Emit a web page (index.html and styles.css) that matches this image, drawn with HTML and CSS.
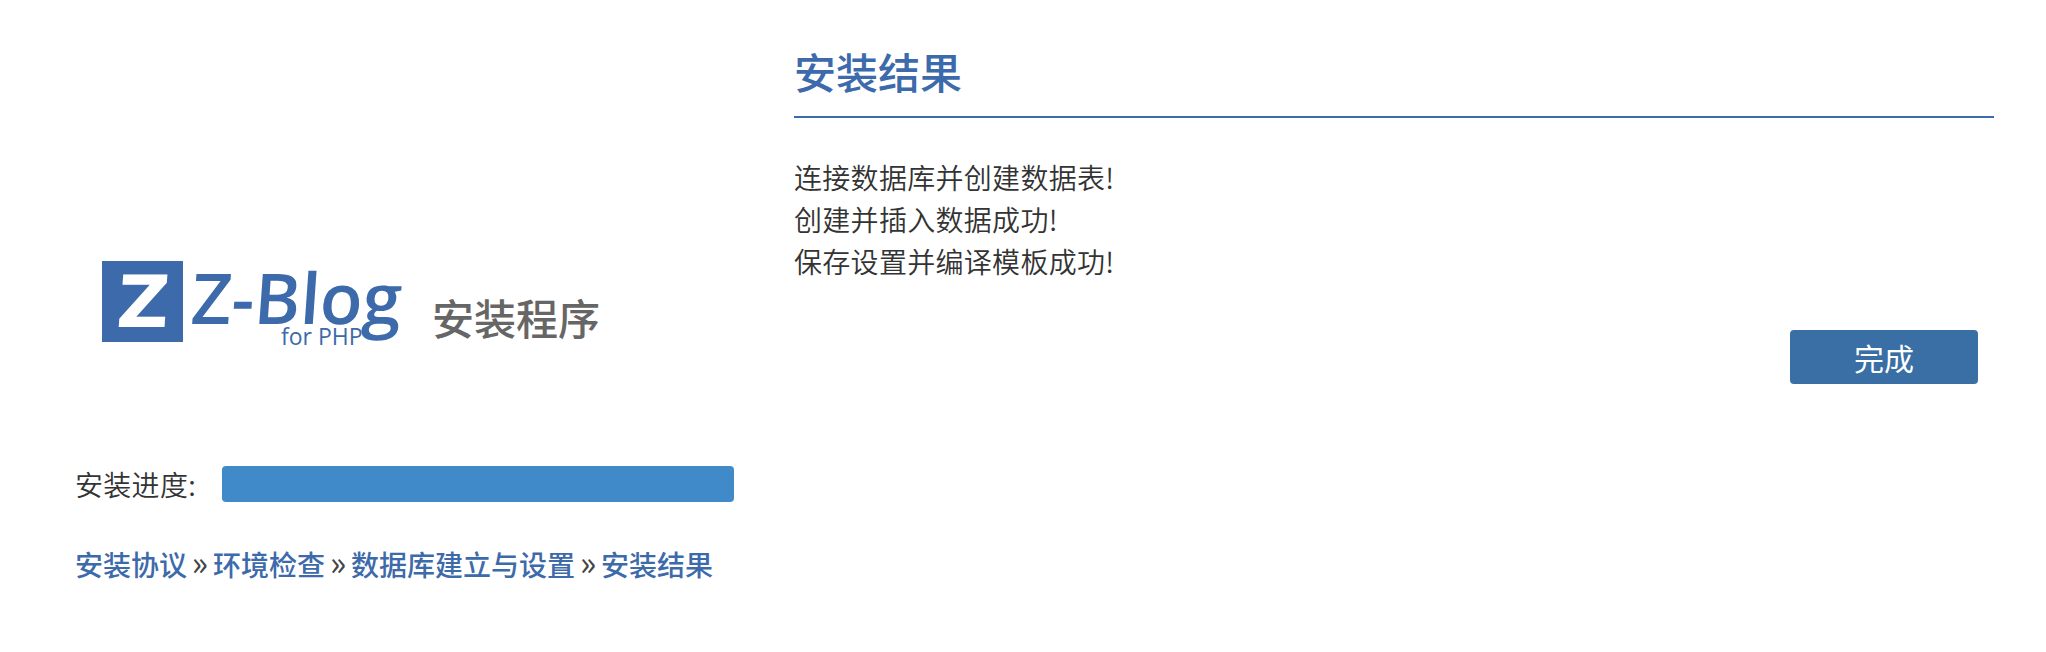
FILE: index.html
```html
<!DOCTYPE html>
<html lang="en">
<head>
  <meta charset="UTF-8">
  <title>Z-Blog 安装程序</title>
  <link rel="stylesheet" href="styles.css">
</head>
<body>
  <div class="container">
    <div class="left">
      <div class="logo-row">
        <svg class="logo" width="304" height="90" viewBox="0 0 304 90">
          <rect x="0" y="0" width="81" height="81" fill="#3d6aaa"/>
          <text class="logo-z" x="18" y="66" transform="skewX(-4)">Z</text>
          <text class="logo-name" x="0" y="0" transform="translate(88 63) skewX(-4)">Z-Blog</text>
          <text class="logo-sub" x="179" y="84">for PHP</text>
        </svg>
        <span class="logo-title">安装程序</span>
      </div>
      <div class="progress-row">
        <span class="progress-label">安装进度:</span>
        <div class="progress-bar"></div>
      </div>
      <div class="steps">
        <span>安装协议</span><i>»</i><span>环境检查</span><i>»</i><span>数据库建立与设置</span><i>»</i><span>安装结果</span>
      </div>
    </div>
    <div class="right">
      <h2>安装结果</h2>
      <p class="messages">
        连接数据库并创建数据表!<br>
        创建并插入数据成功!<br>
        保存设置并编译模板成功!
      </p>
      <div class="button-row">
        <button type="button">完成</button>
      </div>
    </div>
  </div>
</body>
</html>
```

FILE: styles.css
```css
body {
  font-family: "Noto Sans CJK SC", "Liberation Sans", sans-serif;
  background-color: white;
  color: #333;
  margin: 0;
}

.container {
  display: flex;
  width: 1994px;
}

.left {
  width: 794px;
  padding: 261px 0 0 75px;
  box-sizing: border-box;
}

.logo-row {
  display: flex;
  align-items: flex-start;
  height: 90px;
  margin-left: 27px;
}

.logo {
  flex: none;
  overflow: visible;
}

.logo-z {
  font-family: "DejaVu Sans", sans-serif;
  font-weight: bold;
  font-size: 72px;
  fill: white;
}

.logo-name {
  font-family: "Open Sans", sans-serif;
  font-weight: 600;
  font-size: 70px;
  fill: #3d6aaa;
}

.logo-sub {
  font-family: "Open Sans", sans-serif;
  font-size: 23px;
  fill: #3d6aaa;
}

.logo-title {
  font-size: 42px;
  font-weight: 500;
  line-height: 60px;
  margin: 26px 0 0 26px;
  color: #666;
}

.progress-row {
  display: flex;
  align-items: center;
  margin-top: 115px;
}

.progress-label {
  width: 147px;
  font-size: 28px;
  font-weight: 350;
  line-height: 36px;
  letter-spacing: 0.3px;
}

.progress-bar {
  width: 512px;
  height: 36px;
  background-color: #418aca;
  border-radius: 4px;
}

.steps {
  margin-top: 42px;
  font-size: 28px;
  line-height: 40px;
  font-weight: 500;
  white-space: nowrap;
}

.steps span {
  color: #3d6aaa;
}

.steps i {
  display: inline-block;
  width: 26px;
  font-size: 34px;
  font-style: normal;
  font-weight: 400;
  line-height: 30px;
  text-align: center;
  color: #444;
}

.right {
  flex: 1;
}

h2 {
  margin: 0;
  padding: 42px 0 0;
  height: 74px;
  border-bottom: 2px solid #3d6aaa;
  font-size: 42px;
  line-height: 58px;
  font-weight: 500;
  color: #3d6aaa;
}

.messages {
  margin: 38px 0 0;
  font-size: 28px;
  line-height: 42px;
  letter-spacing: 0.3px;
  font-weight: 350;
}

.button-row {
  display: flex;
  justify-content: flex-end;
  margin-top: 48px;
  padding-right: 16px;
}

button {
  width: 188px;
  height: 54px;
  padding: 0;
  background-color: #3a6fa5;
  color: white;
  font-family: inherit;
  font-size: 30px;
  border: none;
  border-radius: 4px;
}
```
